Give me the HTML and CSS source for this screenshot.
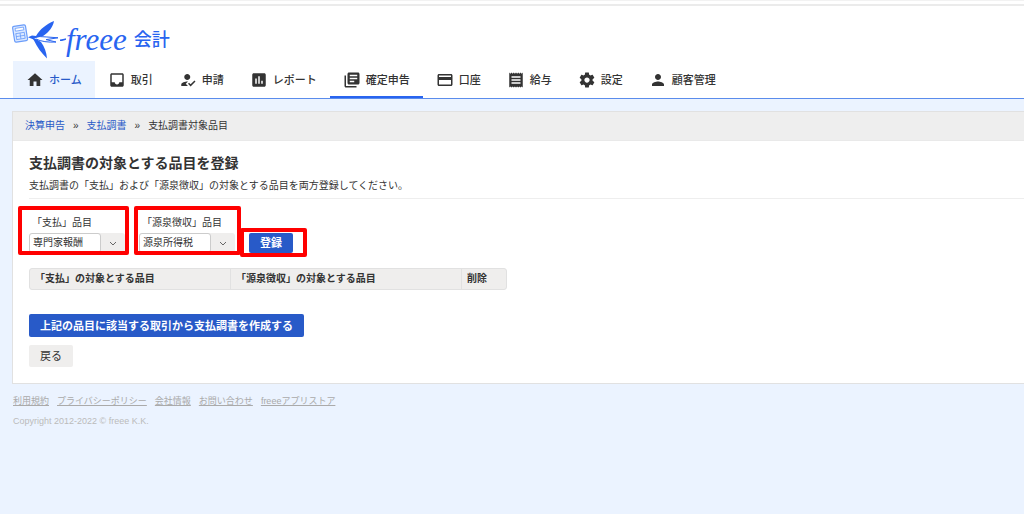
FILE: index.html
```html
<!DOCTYPE html>
<html lang="ja">
<head>
    <meta charset="UTF-8">
    <meta name="viewport" content="width=device-width, initial-scale=1.0">
    <title>支払調書対象品目 - freee 会計</title>
    <link rel="stylesheet" href="styles.css">
</head>
<body>
    <header class="header">
        <div class="logo">
            <svg class="logo-mark" viewBox="12 18 54 42" aria-hidden="true">
                <g transform="rotate(-9 20 32)" fill="none" stroke="#6b9dfa">
                    <rect x="13.500" y="24.500" width="13" height="16" rx="1.500" fill="#dce9ff" stroke-width="1.200"/>
                    <rect x="15.800" y="26.700" width="8.500" height="2.800" fill="#fff" stroke-width=".8"/>
                    <path d="M15.500 32h9M15.500 35h9M15.500 38h9M15.800 32v6M20 32v6M24.300 32v6" stroke-width=".8"/>
                </g>
                <path fill="#2864f0" d="M28 36.300L32 34.500L36 35C40 28 46 23.500 54 20C53 26 49 31 43.500 34.800L36 37L33 38.300z"/>
                <path fill="#2864f0" d="M32 37L36 38L41 41C44.500 46 46.500 51 47 57.500C41.500 52 37 46 34 39.500z"/>
                <path fill="none" stroke="#2864f0" d="M35 35.500C42 35.500 50 36.200 58 36.800L46 38.600L56 41C48 41.500 41 40.500 36 38"/>
                <path fill="none" stroke="#2864f0" stroke-width="1.500" d="M60 39.300C62 39.300 64 38.500 66 38"/>
            </svg>
            <span class="logo-name">freee</span>
            <span class="logo-product">会計</span>
        </div>
        <nav class="nav">
            <a class="nav-item home" href="#">
                <svg class="icon" viewBox="0 0 24 24"><path d="M10 20v-6h4v6h5v-8h3L12 3 2 12h3v8z"/></svg>ホーム
            </a>
            <a class="nav-item" href="#">
                <svg class="icon" viewBox="0 0 24 24"><path d="M19 3H4.990c-1.110 0-1.980.89-1.980 2L3 19c0 1.100.88 2 1.990 2H19c1.100 0 2-.9 2-2V5c0-1.110-.9-2-2-2zm0 12h-4c0 1.660-1.350 3-3 3s-3-1.340-3-3H4.990V5H19v10z"/></svg>取引
            </a>
            <a class="nav-item" href="#">
                <svg class="icon" viewBox="0 0 24 24"><path d="M9 17l3-2.940c-.39-.04-.68-.06-1-.06-2.670 0-8 1.340-8 4v2h9l-3-3zm2-5c2.210 0 4-1.790 4-4s-1.790-4-4-4-4 1.790-4 4 1.790 4 4 4m4.470 8.500L12 17l1.400-1.410 2.070 2.080 5.130-5.170 1.400 1.410z"/></svg>申請
            </a>
            <a class="nav-item" href="#">
                <svg class="icon" viewBox="0 0 24 24"><path d="M19 3H5c-1.100 0-2 .9-2 2v14c0 1.100.9 2 2 2h14c1.100 0 2-.9 2-2V5c0-1.100-.9-2-2-2zM9 17H7v-7h2v7zm4 0h-2V7h2v10zm4 0h-2v-4h2v4z"/></svg>レポート
            </a>
            <a class="nav-item active" href="#">
                <svg class="icon" viewBox="0 0 24 24"><path d="M4 6H2v14c0 1.100.9 2 2 2h14v-2H4V6zm16-4H8c-1.100 0-2 .9-2 2v12c0 1.100.9 2 2 2h12c1.100 0 2-.9 2-2V4c0-1.100-.9-2-2-2zm-1 9H9V9h10v2zm-4 4H9v-2h6v2zm4-8H9V5h10v2z"/></svg>確定申告
            </a>
            <a class="nav-item" href="#">
                <svg class="icon" viewBox="0 0 24 24"><path d="M20 4H4c-1.110 0-1.990.89-1.990 2L2 18c0 1.110.89 2 2 2h16c1.110 0 2-.89 2-2V6c0-1.110-.89-2-2-2zm0 14H4v-6h16v6zm0-10H4V6h16v2z"/></svg>口座
            </a>
            <a class="nav-item" href="#">
                <svg class="icon" viewBox="0 0 24 24"><path d="M18 17H6v-2h12v2zm0-4H6v-2h12v2zm0-4H6V7h12v2zM3 22l1.500-1.500L6 22l1.500-1.500L9 22l1.500-1.500L12 22l1.500-1.500L15 22l1.500-1.500L18 22l1.500-1.500L21 22V2l-1.500 1.500L18 2l-1.500 1.500L15 2l-1.500 1.500L12 2l-1.500 1.500L9 2 7.500 3.500 6 2 4.500 3.500 3 2v20z"/></svg>給与
            </a>
            <a class="nav-item" href="#">
                <svg class="icon" viewBox="0 0 24 24"><path d="M19.430 12.980c.04-.32.07-.64.07-.98s-.03-.66-.07-.98l2.110-1.650c.19-.15.24-.42.12-.64l-2-3.460c-.12-.22-.39-.3-.61-.22l-2.490 1c-.52-.4-1.080-.73-1.690-.98l-.38-2.650C14.460 2.180 14.250 2 14 2h-4c-.25 0-.46.18-.49.42l-.38 2.650c-.61.25-1.170.59-1.690.98l-2.490-1c-.23-.09-.49 0-.61.22l-2 3.460c-.13.22-.07.49.12.64l2.110 1.650c-.04.32-.07.65-.07.98s.03.66.07.98l-2.110 1.650c-.19.15-.24.42-.12.64l2 3.460c.12.22.39.3.61.22l2.490-1c.52.4 1.080.73 1.690.98l.38 2.650c.03.24.24.42.49.42h4c.25 0 .46-.18.49-.42l.38-2.650c.61-.25 1.170-.59 1.690-.98l2.490 1c.23.09.49 0 .61-.22l2-3.460c.12-.22.07-.49-.12-.64l-2.110-1.650zM12 15.500c-1.930 0-3.500-1.570-3.500-3.500s1.570-3.500 3.500-3.500 3.500 1.570 3.500 3.500-1.570 3.500-3.500 3.500z"/></svg>設定
            </a>
            <a class="nav-item" href="#">
                <svg class="icon" viewBox="0 0 24 24"><path d="M12 12c2.210 0 4-1.790 4-4s-1.790-4-4-4-4 1.790-4 4 1.790 4 4 4zm0 2c-2.670 0-8 1.340-8 4v2h16v-2c0-2.660-5.330-4-8-4z"/></svg>顧客管理
            </a>
        </nav>
    </header>

    <main class="panel">
        <div class="breadcrumb">
            <a href="#">決算申告</a>
            <span>»</span>
            <a href="#">支払調書</a>
            <span>»</span>
            <span>支払調書対象品目</span>
        </div>
        <div class="content">
            <h1>支払調書の対象とする品目を登録</h1>
            <p class="lead">支払調書の「支払」および「源泉徴収」の対象とする品目を両方登録してください。</p>
            <hr>
            <form class="item-form">
                <div class="field marked">
                    <label for="payment-item">「支払」品目</label>
                    <div class="combo">
                        <input type="text" id="payment-item" value="専門家報酬">
                        <button type="button" aria-label="品目を選択"><svg viewBox="0 0 8 5"><path d="M1 1l3 3 3-3"/></svg></button>
                    </div>
                </div>
                <div class="field marked">
                    <label for="tax-item">「源泉徴収」品目</label>
                    <div class="combo">
                        <input type="text" id="tax-item" value="源泉所得税">
                        <button type="button" aria-label="品目を選択"><svg viewBox="0 0 8 5"><path d="M1 1l3 3 3-3"/></svg></button>
                    </div>
                </div>
                <div class="submit marked">
                    <button type="button" class="btn btn-primary">登録</button>
                </div>
            </form>

            <table class="item-table">
                <thead>
                    <tr>
                        <th class="col-payment">「支払」の対象とする品目</th>
                        <th class="col-tax">「源泉徴収」の対象とする品目</th>
                        <th class="col-delete">削除</th>
                    </tr>
                </thead>
            </table>

            <div class="actions">
                <button type="button" class="btn btn-primary">上記の品目に該当する取引から支払調書を作成する</button>
                <button type="button" class="btn btn-default">戻る</button>
            </div>
        </div>
    </main>

    <footer class="footer">
        <div class="footer-links">
            <a href="#">利用規約</a>
            <a href="#">プライバシーポリシー</a>
            <a href="#">会社情報</a>
            <a href="#">お問い合わせ</a>
            <a href="#">freeeアプリストア</a>
        </div>
        <p class="copyright">Copyright 2012-2022 © freee K.K.</p>
    </footer>
</body>
</html>
```
FILE: styles.css
```css
:root {
    --primary-color: #285ac8;
    --brand-color: #2864f0;
    --text-color: #333;
    --page-bg: #ebf3ff;
    --gray-bg: #efeeed;
    --border-color: #e1e1e1;
    --mark-color: #ff0000;
}

* {
    box-sizing: border-box;
    margin: 0;
    padding: 0;
}

body {
    font-family: "Liberation Sans", "Noto Sans CJK JP", sans-serif;
    font-size: 10px;
    line-height: 16px;
    color: var(--text-color);
    background: var(--page-bg);
}

a {
    color: var(--primary-color);
    text-decoration: none;
}

input,
button {
    font: inherit;
    color: inherit;
}

/* header */
.header {
    background: #fff;
    border-top: 1px solid #f2f2f2;
    border-bottom: 1px solid #5a8cec;
}

.header::before {
    content: "";
    display: block;
    height: 2px;
    margin-top: 3px;
    background: #ebebeb;
}

.logo {
    display: flex;
    align-items: center;
    height: 43px;
    margin-top: 12px;
    padding-left: 12px;
    color: var(--brand-color);
}

.logo-mark {
    width: 54px;
    height: 42px;
}

.logo-name {
    font-family: "Liberation Serif", serif;
    font-size: 31px;
    font-style: italic;
}

.logo-product {
    margin-left: 7px;
    font-size: 18px;
    font-weight: 500;
}

.nav {
    display: flex;
    height: 37px;
    padding-left: 13px;
}

.nav-item {
    display: flex;
    align-items: center;
    gap: 5px;
    padding: 0 13px;
    font-size: 11px;
    font-weight: 500;
    color: var(--text-color);
    white-space: nowrap;
}

.nav-item.home {
    background: var(--page-bg);
    color: var(--primary-color);
}

.nav-item.active {
    box-shadow: inset 0 -2px var(--brand-color);
}

.icon {
    width: 18px;
    height: 18px;
    fill: var(--text-color);
}

/* main panel */
.panel {
    margin: 12px 0 0 12px;
    background: #fff;
    border: 1px solid var(--border-color);
    border-right: 0;
}

.breadcrumb {
    display: flex;
    align-items: center;
    gap: 8px;
    height: 29px;
    padding: 0 12px;
    background: #eee;
    border-bottom: 1px solid #e9e9e9;
}

.content {
    padding: 12px 0 16px 16px;
}

h1 {
    font-size: 14px;
    line-height: 20px;
}

.lead {
    margin-top: 5px;
}

hr {
    margin-top: 4px;
    border: 0;
    border-top: 1px solid #eee;
}

/* item form */
.item-form {
    display: flex;
    align-items: flex-end;
    gap: 14px;
    margin-top: 14px;
}

.field {
    width: 96px;
}

.field label {
    display: block;
    padding-left: 3px;
    line-height: 20px;
}

.combo {
    display: flex;
    height: 20px;
    background: var(--gray-bg);
    border-radius: 3px;
}

.combo input {
    width: 72px;
    padding: 0 3px;
    border: 1px solid #ccc;
    border-radius: 3px;
    background: #fff;
}

.combo button {
    flex: 1;
    border: 0;
    background: none;
}

.combo svg {
    width: 8px;
    height: 5px;
    fill: none;
    stroke: #666;
}

.marked {
    position: relative;
}

.marked::after {
    content: "";
    position: absolute;
    inset: -7px -4px -2px -11px;
    border: 4px solid var(--mark-color);
    border-radius: 2px;
    pointer-events: none;
}

.field + .field::after {
    left: -5px;
    right: -6px;
}

.submit.marked::after {
    inset: -5px -14px -4px -9px;
}

.btn {
    height: 23px;
    padding: 0 11px;
    border: 0;
    border-radius: 2px;
    font-size: 11px;
    cursor: pointer;
}

.submit .btn {
    display: block;
    height: 20px;
}

.btn-primary {
    background: var(--primary-color);
    color: #fff;
    font-weight: 700;
}

.btn-default {
    height: 22px;
    background: var(--gray-bg);
}

/* registered items */
.item-table {
    width: 478px;
    margin-top: 15px;
    border: 1px solid var(--border-color);
    border-radius: 3px;
    border-spacing: 0;
    table-layout: fixed;
    background: var(--gray-bg);
}

.item-table th {
    height: 20px;
    padding: 0 5px;
    text-align: left;
}

.item-table th + th {
    border-left: 1px solid var(--border-color);
}

.col-payment {
    width: 200px;
}

.col-tax {
    width: 231px;
}

.actions {
    display: flex;
    flex-direction: column;
    align-items: flex-start;
    gap: 8px;
    margin-top: 24px;
}

/* footer */
.footer {
    padding: 9px 13px;
    font-size: 9px;
    color: #bbb;
}

.footer-links {
    display: flex;
    gap: 8px;
}

.footer-links a {
    color: #aaa;
    text-decoration: underline;
}

.copyright {
    margin-top: 4px;
}
```
